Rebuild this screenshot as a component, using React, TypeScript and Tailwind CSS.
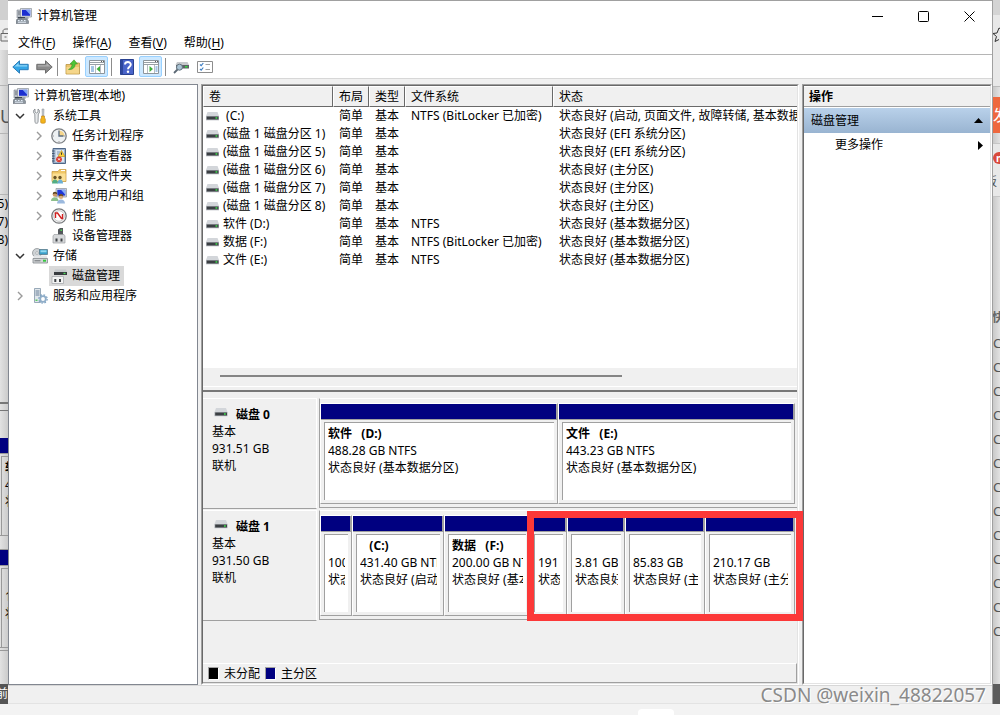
import type { ReactNode } from "react";
import clsx from "clsx";

type IconProps = { className?: string };

const ComputerIcon = ({ className = "w-4 h-4" }: IconProps) => (
  <svg viewBox="0 0 16 16" className={className} aria-hidden="true">
    <path d="M1 2h4l1 1v7H1z" fill="#b9bfc6" stroke="#7d858e" strokeWidth=".6" />
    <path d="M2 4h3M2 6h2" stroke="#59616a" strokeWidth=".8" />
    <path d="M4.500 .5h11v8.500h-11z" fill="#dfe3e8" stroke="#8b9299" strokeWidth=".7" />
    <path d="M6 1.800h8.200v6H6z" fill="#1c2fd0" />
    <path d="M9.500 1.800h4.700v5z" fill="#7fa5f5" />
    <path d="M9 9h3.500v2H9z" fill="#a2a9b0" />
    <path d="M1 11h10l1.500 2v2.500H0V13z" fill="#8d969f" stroke="#5d656e" strokeWidth=".5" />
    <path d="M2 12.500h1.500M5 12.500h1.500M8 12.500h1.500M2 14.200h8" stroke="#e6f0fa" strokeWidth="1" />
    <path d="M2 9.800h7" stroke="#27313b" strokeWidth="1.300" />
  </svg>
);

const DriveIcon = ({ className = "w-[13px] h-[9px]" }: IconProps) => (
  <svg viewBox="0 0 13 9" className={className} aria-hidden="true">
    <path d="M1.500 0h10L13 4v4.500H0V4z" fill="#d3d6da" />
    <path d="M0 4h13v4H0z" fill="#b4b8bd" />
    <path d="M.7 4.500h11.800v3H.7z" fill="#3b3f43" />
    <path d="M9.500 5.200h1.800v1.500H9.500z" fill="#3ee04b" />
  </svg>
);

const ToolsIcon = () => (
  <svg viewBox="0 0 16 16" className="h-4 w-4" aria-hidden="true">
    <path d="M3 1v3l1.500 1L6 4V1c2 1 2 4 .3 5L6 14.500c-.5 1-2.500 1-3 0L2.800 6C1 5 1 2 3 1z" fill="#e8eaec" stroke="#7b8187" strokeWidth=".8" />
    <path d="M10 1h2l-.3 7h-1.400z" fill="#c4c8cc" stroke="#8a9096" strokeWidth=".5" />
    <path d="M9.500 8h3v2l.8 1v3.500c0 1-4.600 1-4.600 0V11l.8-1z" fill="#f3b41b" stroke="#bd7c10" strokeWidth=".6" />
  </svg>
);

const ClockIcon = () => (
  <svg viewBox="0 0 16 16" className="h-4 w-4" aria-hidden="true">
    <circle cx="8" cy="8" r="7.200" fill="#eef1f3" stroke="#7c7f83" strokeWidth="1.300" />
    <path d="M8 8V2.500A5.500 5.500 0 0 1 13.500 8z" fill="#f5d58b" />
    <path d="M8 3v5h4.500" fill="none" stroke="#5b6c80" strokeWidth="1.300" />
    <path d="M8 2v1M8 13v1M2 8h1M13 8h1" stroke="#888" strokeWidth=".8" />
  </svg>
);

const EventIcon = () => (
  <svg viewBox="0 0 16 16" className="h-4 w-4" aria-hidden="true">
    <path d="M2 .5h12.500v15H2z" fill="#9db1ca" stroke="#4f6787" />
    <path d="M4.500 2h8.500v12H4.500z" fill="#dbe5f1" />
    <path d="M1 3h2.500M1 5.500h2.500M1 8h2.500M1 10.500h2.500M1 13h2.500" stroke="#40516a" strokeWidth=".9" />
    <path d="M6 4h3M6 6h2" stroke="#7a94b5" />
    <path d="M10.500 2.500 14 8.500H7z" fill="#ffd23a" stroke="#b58b11" strokeWidth=".6" />
    <path d="M10.500 4.500v2.300" stroke="#333" />
    <circle cx="8" cy="11.300" r="2.900" fill="#dc3b30" />
    <path d="m7 10.300 2 2m0-2-2 2" stroke="#fff" strokeWidth=".9" />
  </svg>
);

const SharedFolderIcon = () => (
  <svg viewBox="0 0 16 16" className="h-4 w-4" aria-hidden="true">
    <path d="M1 3.500h6l1.500-2H15v12H1z" fill="#f0c766" stroke="#c39337" strokeWidth=".7" />
    <path d="M1.500 5.500h13v7.500h-13z" fill="#fbdf94" />
    <path d="M10 2.500h4" stroke="#fff" />
    <circle cx="4" cy="9.500" r="1.700" fill="#6b5526" />
    <circle cx="9" cy="9.500" r="1.700" fill="#6b5526" />
    <path d="M1 15.500c0-5.500 6-5.500 6 0z" fill="#52ae84" />
    <path d="M6.500 15.500c0-5.500 5.500-5.500 5.500 0z" fill="#6aafd4" />
  </svg>
);

const UsersIcon = () => (
  <svg viewBox="0 0 16 16" className="h-4 w-4" aria-hidden="true">
    <path d="M5 .5h10.500v8.500H5z" fill="#d5dae0" stroke="#8b9299" strokeWidth=".7" />
    <path d="M6.300 1.800h8v5.800h-8z" fill="#1f36d8" />
    <path d="M10 1.800h4.300v5z" fill="#8aaef8" />
    <circle cx="4" cy="6.500" r="2.300" fill="#c99a68" />
    <path d="M1.800 6.200C1.800 3 6.200 3 6.200 6.200L4 5.500z" fill="#5c4524" />
    <path d="M0 13c0-5 7.500-5 7.500 0z" fill="#8dbf8b" />
    <circle cx="10" cy="8.800" r="2.300" fill="#d9ad80" />
    <path d="M7.700 8.500c0-3.200 4.600-3.200 4.600 0L10 7.700z" fill="#6b4a24" />
    <path d="M6 15.500c0-5.500 8-5.500 8 0z" fill="#9bb9de" />
  </svg>
);

const PerformanceIcon = () => (
  <svg viewBox="0 0 16 16" className="h-4 w-4" aria-hidden="true">
    <circle cx="8" cy="8" r="7.200" fill="#f6f6f6" stroke="#77797c" strokeWidth="1.300" />
    <circle cx="8" cy="8" r="5.300" fill="#fff" stroke="#b9bbbd" strokeWidth=".8" />
    <path d="M4.500 10V5h2l4 5.500h1V6" fill="none" stroke="#d02121" strokeWidth="1.400" />
  </svg>
);

const DeviceIcon = () => (
  <svg viewBox="0 0 16 16" className="h-4 w-4" aria-hidden="true">
    <path d="M7 1.500 9 0h3v7H7z" fill="#53575b" />
    <path d="M9.500 1.500h1.500v1.500H9.500z" fill="#55d45b" />
    <path d="m2 8 1-1.500h10L14 8v7H2z" fill="#d6d8da" stroke="#9c9fa2" strokeWidth=".7" />
    <path d="M4.500 10.500h2v3h-2zM9.500 10.500h2v3h-2z" fill="#3e4246" />
  </svg>
);

const StorageIcon = () => (
  <svg viewBox="0 0 16 16" className="h-4 w-4" aria-hidden="true">
    <circle cx="5" cy="5" r="4.500" fill="#cfd3d6" stroke="#8e9397" strokeWidth=".8" />
    <circle cx="5" cy="5" r="1.300" fill="#fff" stroke="#8e9397" strokeWidth=".6" />
    <path d="M7.500 1.500h8v5h-8z" fill="#3a9fc9" stroke="#50707f" strokeWidth=".7" />
    <path d="M8.500 2.300h6v2h-6z" fill="#93d9f0" />
    <path d="m1 10.500 1.500-3h12l1 3z" fill="#e3e5e7" />
    <path d="M1 10.500h14.500V15H1z" fill="#d3d6d8" stroke="#84898d" strokeWidth=".8" />
    <path d="M2.500 12.800h6" stroke="#6d7175" />
    <path d="M11 11.700h3v2h-3z" fill="#35c73e" />
  </svg>
);

const DiskIcon = () => (
  <svg viewBox="0 0 16 16" className="h-4 w-4" aria-hidden="true">
    <path d="M4 1.500h11l1 3H3z" fill="#c6c9cc" />
    <path d="M3 4h13v3H3z" fill="#383b3f" />
    <path d="M12.500 4.800h2v1.300h-2z" fill="#4fe05a" />
    <path d="M1 8.500h11.500v7H1z" fill="#f4f4f4" stroke="#a1a4a7" strokeWidth=".7" />
    <path d="M3.300 11h2v3h-2zM8 11h2v3H8z" fill="#404448" />
  </svg>
);

const ServicesIcon = () => (
  <svg viewBox="0 0 16 16" className="h-4 w-4" aria-hidden="true">
    <path d="M2.500.5h6v14h-6z" fill="#e1e7ec" stroke="#8195a8" strokeWidth=".8" />
    <path d="M3.500 3h4M3.500 5h4M3.500 7h4" stroke="#677f97" />
    <path d="M3.500 11.500h2v1.500h-2z" fill="#58c95d" />
    <circle cx="11" cy="11" r="2.800" fill="#fff" stroke="#8fadc8" strokeWidth="1.800" />
    <circle cx="11" cy="11" r="4.200" fill="none" stroke="#7ea2c2" strokeWidth="1.200" strokeDasharray="1.650 1.650" />
  </svg>
);

const ArrowIcon = ({ back }: { back?: boolean }) => (
  <svg viewBox="0 0 17 14" className={clsx("h-[14px] w-[17px]", !back && "rotate-180")} aria-hidden="true">
    <path d="M.8 7 7.500.8v3.500h8.700v5.400H7.500v3.500z" fill={back ? "#35a6e6" : "#8b8b8b"} stroke={back ? "#2b7cb8" : "#6d6d6d"} strokeWidth="1" />
    <path d={back ? "M2.500 6.500 6.500 3v2.300h8.700v1.200z" : "M2.500 7.500 6.500 11V8.700h8.700V7.500z"} fill={back ? "#8fd6f8" : "#b0b0b0"} />
  </svg>
);

const FolderUpIcon = () => (
  <svg viewBox="0 0 16 16" className="h-4 w-4" aria-hidden="true">
    <path d="M1 5.500h6l1.500-1.500H14.500V15H1z" fill="#edc56b" stroke="#b99443" strokeWidth=".8" />
    <path d="M1.500 8h12.500v6.500H1.500z" fill="#f5d68a" />
    <path d="M3.500 10.500C6.500 9 7 7 7 5H5L9 .8 12.500 5h-2.300c0 3.500-2.700 6-6.700 5.500z" fill="#4fc436" stroke="#338a22" strokeWidth=".5" />
  </svg>
);

const PaneIcon = ({ right }: { right?: boolean }) => (
  <svg viewBox="0 0 16 16" className="h-4 w-4" aria-hidden="true">
    <path d="M.5 1.500h15v13H.5z" fill="#fff" stroke="#8d959c" />
    <path d="M1 3.500h14M1 5.500h14" stroke="#8d959c" strokeWidth=".9" />
    <path d="M12 2.500h1M14 2.500h1" stroke="#333" strokeWidth=".8" />
    <path d={right ? "M4.500 6v8M11.500 6v8" : "M6.500 6v8M11.500 6v8"} stroke="#a3abb2" strokeWidth=".8" />
    <path d={right ? "M12.500 8h2M12.500 10h2M12.500 12h2" : "M2 8h3M2 10h3M2 12h3"} stroke="#4a8ccb" />
    {right ? <path d="m6.500 7 3.500 3-3.500 3z" fill="#3fae3a" /> : <path d="m11 7-3.500 3 3.500 3z" fill="#3fae3a" />}
  </svg>
);

const HelpIcon = () => (
  <svg viewBox="0 0 14 16" className="h-4 w-[14px]" aria-hidden="true">
    <path d="M.5.5h13v15H.5z" fill="#4964c9" stroke="#29418f" />
    <path d="M.5.5H3v15H.5z" fill="#2d469d" />
    <path d="M5 5.500C5 2.200 10.800 2.200 10.800 5.500 10.800 7.800 8 7.700 8 10.300" fill="none" stroke="#fff" strokeWidth="1.900" />
    <circle cx="8" cy="12.700" r="1.200" fill="#fff" />
  </svg>
);

const DriveSearchIcon = () => (
  <svg viewBox="0 0 16 16" className="h-4 w-4" aria-hidden="true">
    <path d="M4 3h10.500L16 6H2.500z" fill="#c6c9cc" />
    <path d="M3 6h13v3.500H3z" fill="#5d6165" />
    <path d="M12 7h2.500v1.500H12z" fill="#35d541" />
    <circle cx="6.500" cy="8.200" r="3" fill="#a9c3d4" stroke="#63727d" />
    <path d="m4.500 10.500-3.500 3.500" stroke="#5b6874" strokeWidth="1.800" />
  </svg>
);

const ChecklistIcon = () => (
  <svg viewBox="0 0 16 14" className="h-[14px] w-4" aria-hidden="true">
    <path d="M.5 1.500h15v11H.5z" fill="#fff" stroke="#8d8d8d" />
    <path d="m3 4.500 1.200 1.200L6.300 3M3 9l1.200 1.200L6.300 7.500" fill="none" stroke="#3d7ec4" strokeWidth="1.100" />
    <path d="M8.500 4.500H13M8.500 9.500H13" stroke="#a2a2a2" />
  </svg>
);

const Chevron = ({ open }: { open?: boolean }) => (
  <svg viewBox="0 0 12 12" className="h-3 w-3" aria-hidden="true">
    {open ? (
      <path d="m2 4 4 4 4-4" fill="none" stroke="#333" strokeWidth="1.500" />
    ) : (
      <path d="m4 2 4 4-4 4" fill="none" stroke="#9a9a9a" strokeWidth="1.400" />
    )}
  </svg>
);

type TreeNode = { label: string; level: 0 | 1 | 2; icon: ReactNode; open?: boolean; leaf?: boolean; selected?: boolean };

const tree: TreeNode[] = [
  { label: "计算机管理(本地)", level: 0, icon: <ComputerIcon /> },
  { label: "系统工具", level: 1, icon: <ToolsIcon />, open: true },
  { label: "任务计划程序", level: 2, icon: <ClockIcon /> },
  { label: "事件查看器", level: 2, icon: <EventIcon /> },
  { label: "共享文件夹", level: 2, icon: <SharedFolderIcon /> },
  { label: "本地用户和组", level: 2, icon: <UsersIcon /> },
  { label: "性能", level: 2, icon: <PerformanceIcon /> },
  { label: "设备管理器", level: 2, icon: <DeviceIcon />, leaf: true },
  { label: "存储", level: 1, icon: <StorageIcon />, open: true },
  { label: "磁盘管理", level: 2, icon: <DiskIcon />, leaf: true, selected: true },
  { label: "服务和应用程序", level: 1, icon: <ServicesIcon /> },
];

const indents = ["pl-[2px]", "pl-[5px]", "pl-6"];

const volumes = [
  [" (C:)", "NTFS (BitLocker 已加密)", "状态良好 (启动, 页面文件, 故障转储, 基本数据分区)"],
  ["(磁盘 1 磁盘分区 1)", "", "状态良好 (EFI 系统分区)"],
  ["(磁盘 1 磁盘分区 5)", "", "状态良好 (EFI 系统分区)"],
  ["(磁盘 1 磁盘分区 6)", "", "状态良好 (主分区)"],
  ["(磁盘 1 磁盘分区 7)", "", "状态良好 (主分区)"],
  ["(磁盘 1 磁盘分区 8)", "", "状态良好 (主分区)"],
  ["软件 (D:)", "NTFS", "状态良好 (基本数据分区)"],
  ["数据 (F:)", "NTFS (BitLocker 已加密)", "状态良好 (基本数据分区)"],
  ["文件 (E:)", "NTFS", "状态良好 (基本数据分区)"],
];

type Partition = { name?: string; size: string; status: string };

const disk0: Partition[] = [
  { name: "软件   (D:)", size: "488.28 GB NTFS", status: "状态良好 (基本数据分区)" },
  { name: "文件   (E:)", size: "443.23 GB NTFS", status: "状态良好 (基本数据分区)" },
];

const disk1: Partition[] = [
  { size: "100 MB", status: "状态良好" },
  { name: "   (C:)", size: "431.40 GB NTFS", status: "状态良好 (启动)" },
  { name: "数据   (F:)", size: "200.00 GB NTFS", status: "状态良好 (基本)" },
  { size: "191 MB", status: "状态良好" },
  { size: "3.81 GB", status: "状态良好" },
  { size: "85.83 GB", status: "状态良好 (主分区)" },
  { size: "210.17 GB", status: "状态良好 (主分区)" },
];

const Sunken = ({ className, children }: { className?: string; children: ReactNode }) => (
  <div className={clsx("flex min-w-0 flex-col border border-t-[#a0a0a0] border-r-white border-b-white border-l-[#a0a0a0]", className)}>
    <div className="flex min-h-0 flex-1 flex-col border border-t-[#696969] border-r-[#e3e3e3] border-b-[#e3e3e3] border-l-[#696969]">
      {children}
    </div>
  </div>
);

const PartitionBox = ({ name, size, status }: Partition) => (
  <div className="flex h-[101px] min-w-0 flex-col border-x border-t border-b border-t-white border-r-[#a0a0a0] border-b-[#a0a0a0] border-l-white">
    <div className="h-4 border-r border-b border-[#a0a0a0] bg-[#000080]" />
    <div className="mx-[3px] mt-[2px] mb-[3px] flex-1 border-t border-l border-[#a0a0a0] bg-white pt-[2px] pr-[3px] pl-[3px]">
      <div className="overflow-hidden leading-[17px] whitespace-pre">
        <div className="h-[17px] font-bold">{name}</div>
        <div>{size}</div>
        <div>{status}</div>
      </div>
    </div>
  </div>
);

type DiskRowProps = { title: string; size: string; partitions: Partition[]; columns: string; children?: ReactNode };

const DiskRow = ({ title, size, partitions, columns, children }: DiskRowProps) => (
  <div className="flex h-28">
    <div className="h-[111px] w-[114px] shrink-0 border-t border-r border-b border-t-white border-r-white border-b-[#a0a0a0] pt-[7px] pl-[9px] leading-[17px]">
      <div className="flex items-center font-bold">
        <DriveIcon className="mr-2 mb-1 ml-[2px] h-[9px] w-[14px]" />
        {title}
      </div>
      <div>基本</div>
      <div>{size}</div>
      <div>联机</div>
    </div>
    <div className="ml-[2px] h-[110px] min-w-0 flex-1 border-t border-b border-l border-t-white border-b-[#a0a0a0] border-l-[#a0a0a0] pt-1 pr-[2px]">
      <div className={clsx("relative grid", columns)}>
        {partitions.map((p, i) => (
          <PartitionBox key={i} {...p} />
        ))}
        {children}
      </div>
    </div>
  </div>
);

const menus = [
  ["文件", "F"],
  ["操作", "A"],
  ["查看", "V"],
  ["帮助", "H"],
];

const ToolButton = ({ label, active, children }: { label: string; active?: boolean; children: ReactNode }) => (
  <button
    aria-label={label}
    className={clsx(
      "flex h-[21px] w-[23px] items-center justify-center rounded-xs border",
      active ? "border-[#99d1ff] bg-[#cce8ff]" : "border-transparent"
    )}
  >
    {children}
  </button>
);

const Separator = () => <div className="mr-[2px] h-[18px] w-px bg-[#8c8c8c]" />;

const LeftBackdrop = () => (
  <div className="flex w-2 shrink-0 flex-col overflow-hidden bg-linear-to-r from-[#e2e2e2] to-[#cbcbcb]">
    <div className="h-5 bg-[#d0d0d0]" />
    <div className="flex h-[30px] items-center bg-[#ececec]">
      <svg viewBox="0 0 8 14" className="h-[14px] w-2" aria-hidden="true">
        <path d="M8 5.500H1v7.500h7M3 5.500V3c0-1 1-2 3-2h2M4.500 9h2" fill="none" stroke="#666" />
      </svg>
    </div>
    <div className="h-[36px] border-b border-[#b5b5b5]" />
    <div className="h-12 border-b border-[#b5b5b5] pt-[18px] text-[18px] leading-6 text-[#555]">U</div>
    <div className="h-[61px] border-b border-[#b5b5b5]" />
    <div className="flex h-[207px] flex-col items-end leading-[18px]">
      <span>5)</span>
      <span>7)</span>
      <span>8)</span>
    </div>
    <div className="h-2 border-t-2 border-[#777]" />
    <div className="h-7 border-t border-[#777]" />
    <div className="h-4 shrink-0 border-b border-[#999] bg-[#000080]" />
    <div className="mt-[2px] ml-px h-[79px] shrink-0 overflow-hidden border-t border-l border-[#999] pt-[2px] pl-[3px] leading-[17px]">
      <div className="font-bold">软</div>
      <div>4</div>
      <div>状</div>
    </div>
    <div className="h-[15px] shrink-0 border-y border-[#999]" />
    <div className="h-4 shrink-0 border-b border-[#999] bg-[#000080]" />
    <div className="mt-[2px] ml-px h-[79px] shrink-0 overflow-hidden border-t border-l border-[#999] pt-[19px] pl-[3px] leading-[17px]">
      <div>1</div>
      <div>状</div>
    </div>
    <div className="h-1 shrink-0 border-y border-[#999]" />
    <div className="mt-auto flex h-5 shrink-0 items-center justify-end bg-[#555] text-white">前</div>
  </div>
);

const RightBackdrop = () => (
  <div className="flex w-[7px] shrink-0 flex-col overflow-hidden bg-linear-to-r from-[#c9c9c9] to-[#e2e2e2]">
    <div className="h-[15px] bg-[#d4d4d4]" />
    <div className="h-[72px] border-b border-[#bbb] bg-[#e8e8e8] pt-3">
      <svg viewBox="0 0 8 16" className="h-4 w-2" aria-hidden="true">
        <path d="M8 2 6 1 4 6 0 6.500 3.500 9.500 2 14.500l4-2" fill="none" stroke="#333" />
      </svg>
    </div>
    <div className="mt-[10px] h-9 shrink-0 bg-[#ee683e] text-[16px] leading-9 text-white">发</div>
    <div className="mt-[10px] flex h-[54px] shrink-0 flex-col gap-2 border-y border-[#c6c6c6] bg-[#e8e8e8] pt-2">
      <div className="h-3 w-3 rounded-full bg-[#d94a3c] pl-[3px] text-[10px] leading-3 font-bold text-white">n</div>
      <div className="-ml-2 leading-5 text-[#555]">板</div>
    </div>
    <div className="mt-28 -ml-px leading-[18px] font-bold text-[#666]">快</div>
    <div className="mt-1 text-[13px] leading-6 text-[#555]">
      {Array.from({ length: 13 }, (_, i) => (
        <div key={i}>C</div>
      ))}
    </div>
    <div className="mt-auto h-5 shrink-0 bg-[#5c5c5c]" />
  </div>
);

export default function App() {
  return (
    <div className='relative flex min-h-screen flex-col bg-[#f3f3f3] font-["Noto_Sans","Noto_Sans_CJK_SC",sans-serif] text-[12px] text-black'>
      <div className="flex flex-1">
        <LeftBackdrop />
        <main className="flex min-w-0 flex-1 flex-col border-t border-r border-[#a0a0a0] bg-[#f0f0f0]">
          <header className="flex h-[30px] items-center bg-white pl-2">
            <ComputerIcon />
            <h1 className="ml-[5px] flex-1">计算机管理</h1>
            <button aria-label="最小化" className="flex h-7 w-[46px] items-center justify-center">
              <svg viewBox="0 0 11 11" className="h-[11px] w-[11px]" aria-hidden="true">
                <path d="M0 5.500h11" stroke="#000" />
              </svg>
            </button>
            <button aria-label="最大化" className="flex h-7 w-[46px] items-center justify-center">
              <svg viewBox="0 0 11 11" className="h-[11px] w-[11px]" aria-hidden="true">
                <rect x=".5" y=".5" width="10" height="10" rx="1" fill="none" stroke="#000" />
              </svg>
            </button>
            <button aria-label="关闭" className="flex h-7 w-[46px] items-center justify-center">
              <svg viewBox="0 0 11 11" className="h-[11px] w-[11px]" aria-hidden="true">
                <path d="m.5.500 10 10m0-10-10 10" stroke="#000" />
              </svg>
            </button>
          </header>

          <nav className="flex h-6 items-center gap-[17px] border-b border-[#b5b5b5] bg-white pl-[10px]">
            {menus.map(([name, key]) => (
              <button key={key}>
                {name}(<span className="underline underline-offset-2">{key}</span>)
              </button>
            ))}
          </nav>

          {/* Toolbar */}
          <div className="flex h-6 items-center gap-px border-b border-[#d7d7d7] bg-white pl-px">
            <ToolButton label="后退"><ArrowIcon back /></ToolButton>
            <ToolButton label="前进"><ArrowIcon /></ToolButton>
            <Separator />
            <ToolButton label="上一级"><FolderUpIcon /></ToolButton>
            <ToolButton label="显示/隐藏控制台树" active><PaneIcon /></ToolButton>
            <div className="w-px" />
            <Separator />
            <ToolButton label="帮助"><HelpIcon /></ToolButton>
            <ToolButton label="显示/隐藏操作窗格" active><PaneIcon right /></ToolButton>
            <div className="w-px" />
            <Separator />
            <ToolButton label="刷新"><DriveSearchIcon /></ToolButton>
            <ToolButton label="属性"><ChecklistIcon /></ToolButton>
          </div>

          <div className="flex flex-1 pt-[5px]">
            <ul className="mr-[3px] w-[190px] shrink-0 border border-[#828790] bg-white pt-px">
              {tree.map((node) => (
                <li key={node.label}>
                  <button className={clsx("flex h-5 w-full items-center", indents[node.level])}>
                    {node.level > 0 && (
                      <span className="mr-1 h-3 w-3">{!node.leaf && <Chevron open={node.open} />}</span>
                    )}
                    <span className={clsx("flex h-5 items-center gap-[5px] pr-1 pl-[2px]", node.selected && "bg-[#d9d9d9]")}>
                      {node.icon}
                      {node.label}
                    </span>
                  </button>
                </li>
              ))}
            </ul>

            <Sunken className="mr-[3px] flex-1">
              <div className="flex-1 bg-white">
                <table className="w-full table-fixed border-separate border-spacing-0">
                  <colgroup>
                    <col className="w-[130px]" />
                    <col className="w-9" />
                    <col className="w-9" />
                    <col className="w-[148px]" />
                    <col />
                  </colgroup>
                  <thead>
                    <tr className="bg-[#f0f0f0]">
                      {["卷", "布局", "类型", "文件系统", "状态"].map((h) => (
                        <th
                          key={h}
                          scope="col"
                          className="h-[21px] border-t border-r border-b border-l border-t-white border-r-[#696969] border-b-[#696969] border-l-white p-0 pl-[5px] text-left leading-[18px] font-normal whitespace-nowrap last:border-r-0"
                        >
                          {h}
                        </th>
                      ))}
                    </tr>
                  </thead>
                  <tbody>
                    {volumes.map(([name, fs, status]) => (
                      <tr key={name} className="h-[18px] leading-[18px] whitespace-pre">
                        <td className="p-0 pl-[3px]">
                          <span className="flex items-center gap-1">
                            <DriveIcon />
                            {name}
                          </span>
                        </td>
                        <td className="p-0 pl-[6px]">简单</td>
                        <td className="p-0 pl-[6px]">基本</td>
                        <td className="p-0 pl-[6px]">{fs}</td>
                        <td className="overflow-hidden p-0 pl-[6px]">{status}</td>
                      </tr>
                    ))}
                  </tbody>
                </table>
              </div>
              <div className="h-[18px] pt-[7px] pl-[17px]">
                <div className="h-[2px] w-[402px] bg-[#858585]" />
              </div>
              <div className="h-[6px] border-t border-b-2 border-t-white border-b-[#787878]" />

              <div className="pt-[6px] pb-[41px]">
                <DiskRow title="磁盘 0" size="931.51 GB" partitions={disk0} columns="grid-cols-[238fr_237fr]" />
                <DiskRow
                  title="磁盘 1"
                  size="931.50 GB"
                  partitions={disk1}
                  columns="grid-cols-[32fr_92fr_86fr_37fr_58fr_80fr_90fr]"
                >
                  <div className="absolute -top-1 -right-2 -bottom-[5px] -left-[3px] col-start-4 col-end-8 border-[7px] border-[#fc3838]" />
                </DiskRow>
              </div>

              <div className="flex h-5 items-center border-t border-r border-b border-t-white border-r-[#a0a0a0] border-b-[#a0a0a0] pt-px pl-[5px]">
                <span className="mr-[5px] h-[13px] w-[11px] border border-[#a0a0a0] border-r-white border-b-white bg-black" />
                未分配
                <span className="mr-[5px] ml-[5px] h-[13px] w-[11px] border border-[#a0a0a0] border-r-white border-b-white bg-[#000080]" />
                主分区
              </div>
            </Sunken>

            <Sunken className="w-[190px] shrink-0 bg-white">
              <h2 className="h-[21px] border-t border-b border-t-white border-b-[#a0a0a0] bg-[#f0f0f0] pl-[5px] leading-5 font-bold">操作</h2>
              <button className="mt-px flex h-[25px] items-center justify-between bg-linear-to-b from-[#b9d1ea] to-[#99b4d1] pr-[7px] pl-[7px]">
                磁盘管理
                <svg viewBox="0 0 9 5" className="h-[5px] w-[9px]" aria-hidden="true">
                  <path d="M0 5 4.500 0 9 5z" />
                </svg>
              </button>
              <button className="flex h-6 items-center justify-between pr-[7px] pl-[31px]">
                更多操作
                <svg viewBox="0 0 5 9" className="h-[9px] w-[5px]" aria-hidden="true">
                  <path d="m0 0 5 4.500L0 9z" />
                </svg>
              </button>
            </Sunken>
          </div>

          <footer className="h-[19px] border-t border-b border-t-[#d7d7d7] border-b-[#e3e3e3]" />
        </main>
        <RightBackdrop />
      </div>
      <div className="flex h-[11px] items-end">
        <div className="ml-[638px] h-[6px] w-9 rounded-t-sm bg-white" />
      </div>
      <div className="absolute right-[14px] bottom-2 text-[19px] leading-6 text-[#8a8a8a] [text-shadow:1px_1px_0_#fff]">
        CSDN @weixin_48822057
      </div>
    </div>
  );
}
